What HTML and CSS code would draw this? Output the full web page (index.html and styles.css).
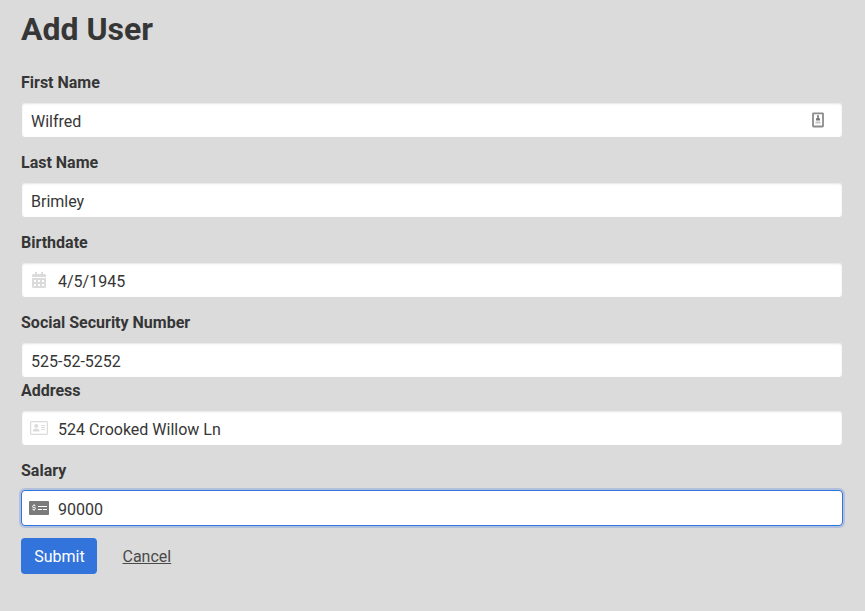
FILE: index.html
```
<!DOCTYPE html>
<html lang="en">
<head>
<meta charset="utf-8">
<title>Add User</title>
<link rel="stylesheet" href="styles.css">
</head>
<body>
<form class="form">
  <h1 class="title">Add User</h1>
  <div class="field">
    <label class="label">First Name</label>
    <div class="control">
      <span class="value">Wilfred</span>
      <svg class="autofill" width="12" height="16" viewBox="0 0 12 16"><rect x="1" y="1.300" width="10" height="13.200" rx=".5" fill="#fff" stroke="#8c8c8c" stroke-width="1.800"/><rect x="5" y="3" width="2" height="3" rx=".8" fill="#888"/><path d="M4 8.500V6.500Q6 5 8 6.500v2z" fill="#777"/><path d="M3.500 9.500h5v2h-5z" fill="#c4c4c4"/></svg>
    </div>
  </div>
  <div class="field">
    <label class="label">Last Name</label>
    <div class="control"><span class="value">Brimley</span></div>
  </div>
  <div class="field">
    <label class="label">Birthdate</label>
    <div class="control">
      <span class="icon"><svg width="14" height="16" viewBox="0 0 14 16"><path fill-rule="evenodd" d="M3 2V.5q0-.5.5-.5h1q.5 0 .5.500V2h4V.5q0-.5.5-.5h1q.5 0 .5.500V2h1.500Q14 2 14 3.500V5H0V3.500Q0 2 1.500 2zM0 6h14v8.500q0 1.500-1.500 1.500h-11Q0 16 0 14.500zM2 8v2h2V8zM6 8v2h2V8zM10 8v2h2V8zM2 12v2h2v-2zM6 12v2h2v-2zM10 12v2h2v-2z"/></svg></span>
      <span class="value">4/5/1945</span>
    </div>
  </div>
  <div class="field compact">
    <label class="label">Social Security Number</label>
    <div class="control"><span class="value">525-52-5252</span></div>
  </div>
  <div class="field">
    <label class="label">Address</label>
    <div class="control">
      <span class="icon"><svg width="18" height="16" viewBox="0 0 18 16"><rect x=".6" y="1.600" width="16.800" height="12.800" rx="1" fill="none" stroke="currentColor" stroke-width="1.200"/><circle cx="6.200" cy="6" r="2"/><path d="M2.800 11.500Q2.800 8.700 4.500 8.700h3.400q1.700 0 1.700 2.800zM11 5h4v1h-4zM11 7h4v1h-4zM11 9h4v1h-4z"/></svg></span>
      <span class="value">524 Crooked Willow Ln</span>
    </div>
  </div>
  <div class="field">
    <label class="label">Salary</label>
    <div class="control focused">
      <span class="icon"><svg width="20" height="16" viewBox="0 0 20 16"><rect y="1" width="20" height="14" rx=".8"/><path d="M6.400 5.700H4.500q-1 0-1 .9t1 .9h1q1 0 1 .9t-1 .9h-2M5 4.300v1.400M5 9.300v1.500M9 9.500h4M14 9.500h4M9 6.500h9" fill="none" stroke="#fff"/></svg></span>
      <span class="value">90000</span>
    </div>
  </div>
  <div class="actions">
    <button class="submit" type="button">Submit</button>
    <a class="cancel" href="#">Cancel</a>
  </div>
</form>
</body>
</html>
```
FILE: styles.css
```
* { box-sizing: border-box; }
body {
  margin: 0;
  background: #dbdbdb;
  color: #363636;
  font: 16px/24px Roboto, sans-serif;
}
.form { padding: 11px 22px 0 21px; }
.title { margin: 0 0 24px; font-size: 32px; line-height: 36px; font-weight: 700; }
.field { margin-bottom: 13px; }
.compact { margin-bottom: 1px; }
.label { display: block; margin-bottom: 7px; font-weight: 700; }
.control {
  display: flex;
  align-items: center;
  height: 36px;
  padding: 0 9px;
  border: 1px solid #dbdbdb;
  border-radius: 4px;
  background: #fff;
  box-shadow: inset 0 1px 2px rgba(10, 10, 10, .1);
}
.value { padding-top: 3px; }
.icon {
  display: flex;
  flex: none;
  justify-content: center;
  width: 36px;
  margin: 0 1px 0 -10px;
  color: #dbdbdb;
  fill: currentColor;
}
.focused { border-color: #3273dc; box-shadow: 0 0 0 2px rgba(50, 115, 220, .25); }
.focused .icon { color: #7a7a7a; }
.autofill { margin-left: auto; margin-right: 9px; }
.actions { display: flex; gap: 12.500px; margin-top: -1px; }
.submit {
  height: 36px;
  width: 76px;
  padding: 2px 0 0 1px;
  border: 0;
  border-radius: 4px;
  background: #3273dc;
  color: #fff;
  font: inherit;
}
.cancel { padding: 7px 13px 5px; color: #4a4a4a; text-decoration: underline; }
```
